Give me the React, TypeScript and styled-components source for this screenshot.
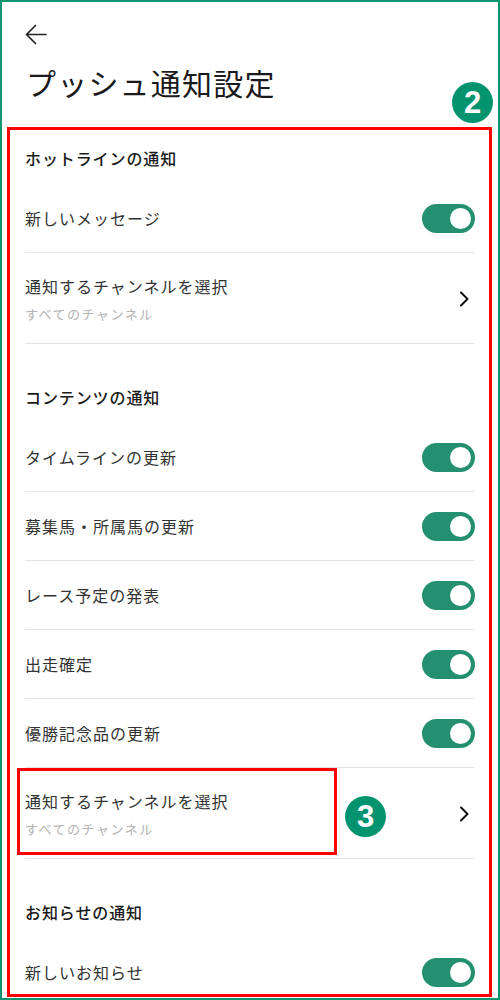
import React from "react";
import styled, { createGlobalStyle } from "styled-components";

const GlobalStyle = createGlobalStyle`
  html, body { margin: 0; padding: 0; background: #fff; }
  body { font-family: "Noto Sans CJK JP", "Noto Sans", sans-serif; }
`;

const Frame = styled.div`
  width: 500px;
  height: 1000px;
  box-sizing: border-box;
  border: 2px solid #109572;
  background: #fff;
  overflow: hidden;
  display: flex;
  flex-direction: column;
  font-family: "Noto Sans CJK JP", "Noto Sans", sans-serif;
`;

const Header = styled.header`
  display: flex;
  flex-direction: column;
  align-items: flex-start;
  padding: 21px 0 0 23px;
`;

const BackButton = styled.button`
  width: 22px;
  height: 22px;
  padding: 0;
  border: none;
  background: none;
  display: flex;
  align-items: center;
  justify-content: center;
  color: #222;
`;

const Title = styled.h1`
  margin: 17px 0 0 1px;
  font-size: 30px;
  line-height: 40px;
  font-weight: 400;
  letter-spacing: 1.2px;
  color: #1a1a1a;
`;

const Panel = styled.section`
  position: relative;
  margin: 25px 0 0 5px;
  width: 485px;
  height: 870px;
  box-sizing: border-box;
  border: 3px solid #ff0000;
`;

const List = styled.div`
  height: 100%;
  overflow: hidden;
  padding: 0 14px 0 15px;
  box-sizing: border-box;
`;

const Badge = styled.div`
  position: absolute;
  width: 41px;
  height: 41px;
  border-radius: 50%;
  background: #04936f;
  color: #fff;
  display: flex;
  align-items: center;
  justify-content: center;
  font-family: "Liberation Sans", Arial, sans-serif;
  font-weight: 700;
  font-size: 31px;
  line-height: 1;
`;

const PanelBadge = styled(Badge)`
  top: -48px;
  right: -4px;
`;

const RowBadge = styled(Badge)`
  top: 28px;
  left: 320px;
`;

const Highlight = styled.div`
  position: absolute;
  top: 0;
  left: -8px;
  width: 320px;
  height: 87px;
  box-sizing: border-box;
  border: 3px solid #ff0000;
  pointer-events: none;
`;

const Section = styled.div`
  & + & {
    margin-top: 25px;
  }
`;

const SectionTitle = styled.h2`
  margin: 0;
  padding: 16px 0 14px;
  font-size: 16px;
  line-height: 24px;
  font-weight: 500;
  letter-spacing: 0.9px;
  color: #1a1a1a;
`;

const ToggleRowBox = styled.div`
  height: 68px;
  border-bottom: 1px solid #e4e4e4;
  display: flex;
  align-items: center;
  justify-content: space-between;
`;

const Label = styled.span`
  font-size: 16px;
  line-height: 24px;
  letter-spacing: 1px;
  color: #333;
`;

const Track = styled.span<{ $on: boolean }>`
  width: 53px;
  height: 29px;
  border-radius: 15px;
  box-sizing: border-box;
  padding: 0 4px;
  background: ${(p) => (p.$on ? "#24906f" : "#ccc")};
  display: flex;
  align-items: center;
  justify-content: ${(p) => (p.$on ? "flex-end" : "flex-start")};
`;

const Knob = styled.span`
  width: 21px;
  height: 21px;
  border-radius: 50%;
  background: #fff;
`;

const ChannelRowBox = styled.div`
  position: relative;
  padding: 21px 0 19px;
  border-bottom: 1px solid #e4e4e4;
  display: flex;
  align-items: center;
  justify-content: space-between;
`;

const ChannelText = styled.div`
  display: flex;
  flex-direction: column;
`;

const SubLabel = styled.span`
  margin-top: 6px;
  font-size: 13px;
  line-height: 20px;
  letter-spacing: 1.5px;
  color: #b3b3b3;
`;

const Chevron = styled.span`
  width: 14px;
  height: 18px;
  margin-right: 4px;
  display: flex;
  align-items: center;
  justify-content: center;
  color: #111;
`;

const Toggle = ({ on = true }: { on?: boolean }) => (
  <Track $on={on} role="switch" aria-checked={on}>
    <Knob />
  </Track>
);

const ToggleRow = ({ label }: { label: string }) => (
  <ToggleRowBox>
    <Label>{label}</Label>
    <Toggle />
  </ToggleRowBox>
);

const ChannelRow = ({ annotated = false }: { annotated?: boolean }) => (
  <ChannelRowBox>
    <ChannelText>
      <Label>通知するチャンネルを選択</Label>
      <SubLabel>すべてのチャンネル</SubLabel>
    </ChannelText>
    <Chevron>
      <svg width="10" height="16" viewBox="0 0 10 16" fill="none">
        <path d="M2 1.5 L8.5 8 L2 14.5" stroke="currentColor" strokeWidth="2" strokeLinecap="round" strokeLinejoin="round" />
      </svg>
    </Chevron>
    {annotated && (
      <>
        <Highlight />
        <RowBadge>3</RowBadge>
      </>
    )}
  </ChannelRowBox>
);

export default function App() {
  return (
    <>
      <GlobalStyle />
      <Frame>
        <Header>
          <BackButton aria-label="戻る">
            <svg width="22" height="21" viewBox="0 0 22 21" fill="none">
              <path d="M21 10.5 H1.5 M10.5 1.5 L1.5 10.5 L10.5 19.5" stroke="currentColor" strokeWidth="1.7" strokeLinecap="round" strokeLinejoin="round" />
            </svg>
          </BackButton>
          <Title>プッシュ通知設定</Title>
        </Header>
        <Panel>
          <PanelBadge>2</PanelBadge>
          <List>
            <Section>
              <SectionTitle>ホットラインの通知</SectionTitle>
              <ToggleRow label="新しいメッセージ" />
              <ChannelRow />
            </Section>
            <Section>
              <SectionTitle>コンテンツの通知</SectionTitle>
              <ToggleRow label="タイムラインの更新" />
              <ToggleRow label="募集馬・所属馬の更新" />
              <ToggleRow label="レース予定の発表" />
              <ToggleRow label="出走確定" />
              <ToggleRow label="優勝記念品の更新" />
              <ChannelRow annotated />
            </Section>
            <Section>
              <SectionTitle>お知らせの通知</SectionTitle>
              <ToggleRow label="新しいお知らせ" />
            </Section>
          </List>
        </Panel>
      </Frame>
    </>
  );
}
